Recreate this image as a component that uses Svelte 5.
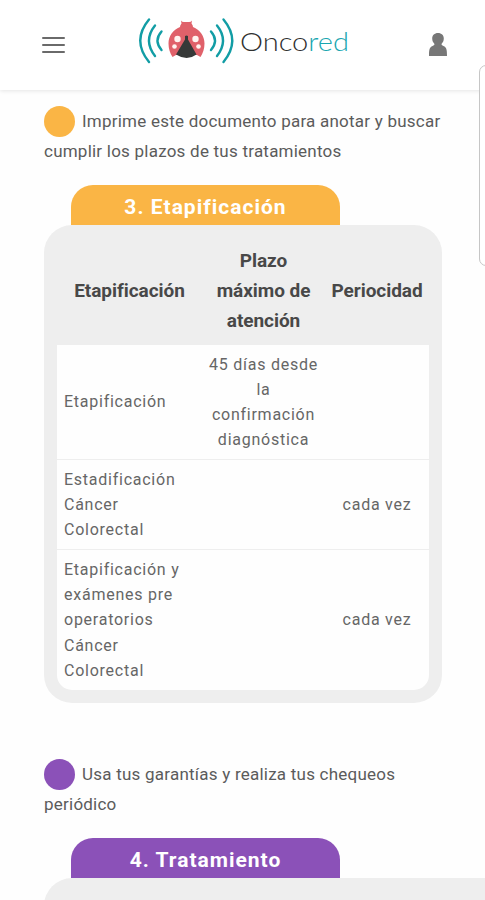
<script lang="ts">
	type Row = { name: string[]; deadline: string[]; period: string };

	const columns: Array<Array<string>> = [
		['Etapificación'],
		['Plazo', 'máximo de', 'atención'],
		['Periocidad']
	];

	const rows: Array<Row> = [
		{
			name: ['Etapificación'],
			deadline: ['45 días desde', 'la', 'confirmación', 'diagnóstica'],
			period: ''
		},
		{ name: ['Estadificación', 'Cáncer', 'Colorectal'], deadline: [], period: 'cada vez' },
		{
			name: ['Etapificación y', 'exámenes pre', 'operatorios', 'Cáncer', 'Colorectal'],
			deadline: [],
			period: 'cada vez'
		}
	];
</script>

<div class="screen">
	<header class="topbar">
		<button class="menu" aria-label="Menú">
			<span></span>
			<span></span>
			<span></span>
		</button>

		<svg class="logo" width="216" height="50" viewBox="136 16 216 50" aria-label="Oncored">
			<g class="waves">
				<path d="M149 19.5Q131.500 40.500 149 62" />
				<path d="M155 25.500Q143 40.500 155 56" />
				<path d="M161.500 31.500Q153.500 40.500 161.500 50" />
				<path d="M211 31.500Q219 40.500 211 50" />
				<path d="M217 25.500Q229 40.500 217 56" />
				<path d="M223.500 19.500Q241 40.500 223.500 62" />
			</g>
			<path
				class="shell"
				d="M181 20.500Q182 22 184 22H189Q191 22 192 20.500L191.500 23.500Q193 25 193 27C200 30 204.500 36 204.500 43.500C204.500 49 203 53 200.500 57L197 55H176L172.500 57C170 53 168.500 49 168.500 43.500C168.500 36 173 30 180 27Q180 25 181.500 23.500Z"
			/>
			<path class="body" d="M185 36Q186.500 35 188 36V39.500L196.500 54.500Q187 61.500 176 54.500L185 39.500Z" />
			<g class="dots">
				<circle cx="177.500" cy="39" r="3.200" />
				<circle cx="195.500" cy="39" r="3.200" />
				<circle cx="174.500" cy="46.500" r="2.300" />
				<circle cx="198.500" cy="46.500" r="2.300" />
			</g>
			<text class="brand" x="240" y="51" textLength="109" lengthAdjust="spacingAndGlyphs"
				>Onco<tspan class="red">red</tspan></text
			>
		</svg>

		<svg class="user" width="20" height="25" viewBox="0 0 20 25" aria-hidden="true">
			<path
				d="M10 1C6.500 1 4.200 3.300 4.200 6.500C4.200 9 5.200 10.500 6.500 12C6.500 13 5.500 13.500 4 14.300C1.500 15.600 1 18 1 24H19C19 18 18.500 15.600 16 14.300C14.500 13.500 13.500 13 13.500 12C14.800 10.500 15.800 9 15.800 6.500C15.800 3.300 13.500 1 10 1Z"
			/>
		</svg>
	</header>

	<div class="handle"></div>

	<main>
		<p class="intro">
			<span class="bullet orange"></span>Imprime este documento para anotar y buscar<br />
			<span>cumplir los plazos de tus tratamientos</span>
		</p>

		<h2 class="tab orange">3. Etapificación</h2>
		<section class="card">
			<div class="row head">
				{#each columns as lines}
					<div class="cell">
						{#each lines as line}
							<span>{line}</span>
						{/each}
					</div>
				{/each}
			</div>
			<div class="body-rows">
				{#each rows as row}
					<div class="row">
						<div class="cell name">
							{#each row.name as line}
								<span>{line}</span>
							{/each}
						</div>
						<div class="cell">
							{#each row.deadline as line}
								<span>{line}</span>
							{/each}
						</div>
						<div class="cell">{row.period}</div>
					</div>
				{/each}
			</div>
		</section>

		<p class="intro next">
			<span class="bullet purple"></span>Usa tus garantías y realiza tus chequeos<br />
			<span>periódico</span>
		</p>

		<h2 class="tab purple">4. Tratamiento</h2>
		<section class="card wide"></section>
	</main>
</div>

<style>
	:global(body) {
		margin: 0;
		background: #fefefe;
	}

	.screen {
		position: relative;
		width: 485px;
		height: 900px;
		overflow: hidden;
		box-sizing: border-box;
		background: #fefefe;
		font-family: Roboto, sans-serif;
		color: #5b5b5b;
	}

	.topbar {
		height: 90px;
		box-sizing: border-box;
		padding: 16px 37px 0 42px;
		display: flex;
		align-items: flex-start;
		background: white;
		box-shadow: 0 1px 4px rgba(0, 0, 0, 0.1);
	}

	.menu {
		width: 23px;
		margin: 21px 0 0;
		padding: 0;
		border: 0;
		background: none;
		display: flex;
		flex-direction: column;
		gap: 5px;
	}

	.menu span {
		height: 2px;
		border-radius: 1px;
		background: #6a6a6a;
	}

	.logo {
		margin-left: 71px;
	}

	.waves {
		fill: none;
		stroke: #129da5;
		stroke-width: 2.4;
		stroke-linecap: round;
	}

	.shell {
		fill: #e0616a;
	}

	.body {
		fill: #363938;
	}

	.dots {
		fill: #fff4f0;
	}

	.brand {
		font-family: Lato, sans-serif;
		font-size: 26px;
		font-weight: 300;
		fill: #303030;
	}

	.red {
		fill: #19a6b0;
	}

	.user {
		margin: 16px 0 0 auto;
		fill: #777;
	}

	.handle {
		position: absolute;
		top: 65px;
		left: 479px;
		width: 20px;
		height: 199px;
		border: 1px solid #c6c6c6;
		border-radius: 7px;
		background: white;
	}

	main {
		padding: 16px 0 0 44px;
	}

	.intro {
		height: 60px;
		margin: 0;
		font-size: 17px;
		line-height: 30px;
		letter-spacing: 0.23px;
		white-space: nowrap;
	}

	.bullet {
		display: inline-block;
		width: 31px;
		height: 31px;
		margin: -10px 7px -8px 0;
		border-radius: 50%;
		vertical-align: middle;
	}

	.orange {
		background: #fab545;
	}

	.purple {
		background: #8b51b8;
	}

	.tab {
		width: 269px;
		height: 40px;
		margin: 19px 0 0 27px;
		border-radius: 22px 22px 0 0;
		color: white;
		font-size: 21px;
		font-weight: 700;
		line-height: 44px;
		letter-spacing: 1px;
		text-align: center;
	}

	.card {
		width: 398px;
		height: 478px;
		box-sizing: border-box;
		padding: 0 13px 13px;
		border-radius: 28px;
		background: #eee;
	}

	.row {
		display: grid;
		grid-template-columns: 145px 123px 104px;
		align-items: center;
		box-sizing: border-box;
	}

	.cell {
		display: flex;
		flex-direction: column;
		align-items: center;
		white-space: nowrap;
	}

	.head {
		height: 120px;
		padding-top: 12px;
		color: #484848;
		font-size: 19px;
		font-weight: 700;
		line-height: 30px;
		letter-spacing: -0.05px;
	}

	.body-rows {
		border-radius: 0 0 15px 15px;
		background: #fefefe;
		font-size: 16px;
		line-height: 25.2px;
		letter-spacing: 0.75px;
		color: #666;
	}

	.body-rows .row {
		height: 90px;
		border-bottom: 1px solid #eee;
	}

	.body-rows .row:first-child {
		height: 115px;
	}

	.body-rows .row:last-child {
		height: 140px;
		border-bottom: 0;
	}

	.name {
		padding-left: 7px;
		align-items: flex-start;
	}

	.next {
		margin-top: 56px;
	}

	.wide {
		width: 470px;
		height: 60px;
	}
</style>
